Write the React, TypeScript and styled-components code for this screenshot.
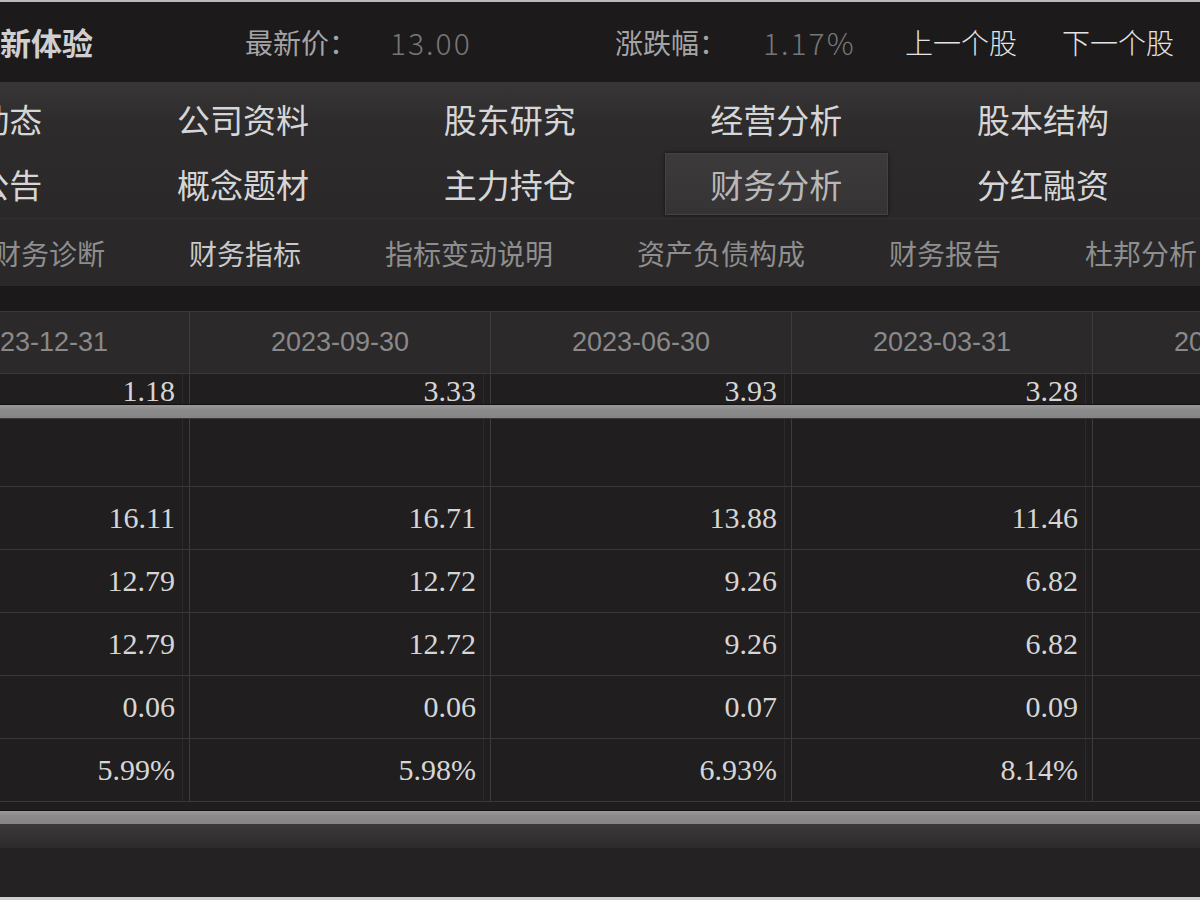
import styled, { createGlobalStyle } from 'styled-components';

const GlobalStyle = createGlobalStyle`
  html, body {
    margin: 0;
    padding: 0;
    background: #1d1b1c;
    overflow: hidden;
  }

  #root {
    width: 1200px;
    height: 900px;
    overflow: hidden;
  }
`;

const CJK = `'Noto Sans CJK SC', 'Noto Sans', sans-serif`;

const PERIODS = ['2023-12-31', '2023-09-30', '2023-06-30', '2023-03-31', '2022-12-31'];

const ROWS: (string[] | null)[] = [
  null,
  ['16.11', '16.71', '13.88', '11.46', ''],
  ['12.79', '12.72', '9.26', '6.82', ''],
  ['12.79', '12.72', '9.26', '6.82', ''],
  ['0.06', '0.06', '0.07', '0.09', ''],
  ['5.99%', '5.98%', '6.93%', '8.14%', ''],
];

const TOP_ROW = ['1.18', '3.33', '3.93', '3.28', ''];

const NAV_TABS = [
  ['最新动态', '公司资料', '股东研究', '经营分析', '股本结构'],
  ['新闻公告', '概念题材', '主力持仓', '财务分析', '分红融资'],
];

const SUB_TABS = ['财务诊断', '财务指标', '指标变动说明', '资产负债构成', '财务报告', '杜邦分析'];

const Page = styled.div`
  width: 1200px;
  height: 900px;
  display: flex;
  flex-direction: column;
  background: #242223;
  font-family: ${CJK};
  overflow: hidden;
`;

const TopEdge = styled.div`
  height: 2px;
  flex: none;
  background: #b9b9b9;
`;

const QuoteBar = styled.div`
  height: 80px;
  flex: none;
  display: flex;
  align-items: center;
  background: #1c1a1b;
  font-size: 28px;
`;

const Brand = styled.div`
  width: 245px;
  flex: none;
  font-size: 31px;
  font-weight: 700;
  color: #cfcfcf;
  margin-top: -2px;
`;

const QuoteField = styled.div<{ $width: number; $gap: number }>`
  width: ${(p) => p.$width}px;
  flex: none;
  display: flex;
  gap: ${(p) => p.$gap}px;
  align-items: center;
`;

const QuoteLabel = styled.span`
  color: #a4a4a4;
`;

const QuoteValue = styled.span`
  color: #777777;
  font-weight: 300;
  font-size: 30px;
  letter-spacing: 2px;
`;

const StockLinks = styled.div`
  display: flex;
  gap: 45px;
`;

const StockLink = styled.span`
  color: #e4e4e4;
  font-weight: 300;
`;

const NavArea = styled.div`
  height: 136px;
  flex: none;
  box-sizing: border-box;
  padding-top: 6px;
  background: linear-gradient(#383637, #2d2b2c 30%, #2a2829);
  overflow: hidden;
`;

const NavGrid = styled.div`
  margin-left: -157px;
  display: grid;
  grid-template-columns: repeat(5, 266.67px);
  grid-auto-rows: 62px;
  row-gap: 3px;
`;

const NavCell = styled.div`
  display: flex;
  justify-content: center;
  align-items: center;
`;

const NavTab = styled.div<{ $active?: boolean }>`
  width: 223px;
  height: 62px;
  box-sizing: border-box;
  display: flex;
  justify-content: center;
  align-items: center;
  font-size: 33px;
  color: ${(p) => (p.$active ? '#b8b8b8' : '#d6d6d6')};
  background: ${(p) => (p.$active ? 'linear-gradient(#3c3a3b, #353334)' : 'transparent')};
  border: 1px solid ${(p) => (p.$active ? '#444243' : 'transparent')};
  box-shadow: ${(p) => (p.$active ? '0 0 4px rgba(0,0,0,0.6)' : 'none')};
`;

const SubNav = styled.div`
  height: 67px;
  flex: none;
  display: flex;
  align-items: center;
  gap: 84px;
  background: #2a2829;
  border-top: 1px solid #323031;
  overflow: hidden;
`;

const SubTab = styled.span<{ $active?: boolean; $first?: boolean }>`
  flex: none;
  font-size: 28px;
  margin-left: ${(p) => (p.$first ? '-7px' : '0')};
  color: ${(p) => (p.$active ? '#c9c9c9' : '#8e8e8e')};
`;

const Gap = styled.div`
  height: 25px;
  flex: none;
  background: #1b191a;
`;

const TableArea = styled.div`
  flex: none;
  margin-left: -111px;
  width: 1505px;
`;

const Row = styled.div<{ $height: number; $head?: boolean }>`
  display: grid;
  grid-template-columns: repeat(5, 301px);
  height: ${(p) => p.$height}px;
  box-sizing: border-box;
  background: ${(p) => (p.$head ? '#2b292a' : '#201e1f')};
  border-top: 1px solid #3a3839;
`;

const Cell = styled.div<{ $head?: boolean }>`
  display: flex;
  align-items: center;
  justify-content: ${(p) => (p.$head ? 'center' : 'flex-end')};
  padding-right: ${(p) => (p.$head ? '0' : '14px')};
  border-right: 1px solid #3d3b3c;
  background-image: linear-gradient(
    to left,
    transparent 6px,
    #2c2a2b 6px,
    #2c2a2b 7px,
    transparent 7px
  );
  font-family: ${(p) => (p.$head ? `'Liberation Sans', Arial, sans-serif` : `'Liberation Serif', 'Times New Roman', serif`)};
  font-size: ${(p) => (p.$head ? '27px' : '30px')};
  color: ${(p) => (p.$head ? '#8a8a8a' : '#d6d6d6')};
`;

const Splitter = styled.div`
  height: 14px;
  flex: none;
  background: linear-gradient(#9a9a9a, #8a8a8a 40%, #858585);
  border-top: 1px solid #121011;
  box-sizing: border-box;
`;

const TableEnd = styled.div`
  height: 8px;
  flex: none;
  background: #1f1d1e;
  border-top: 1px solid #3a3839;
`;

const FooterShade = styled.div`
  height: 24px;
  flex: none;
  background: linear-gradient(#3b393a, #333132 60%, #2c2a2b);
`;

const FooterFill = styled.div`
  flex: 1;
  background: #242223;
`;

const BottomEdge = styled.div`
  height: 3px;
  flex: none;
  background: #cfcfcf;
`;

const App = () => {
  return (
    <>
      <GlobalStyle />
      <Page>
        <TopEdge />

        <QuoteBar>
          <Brand>新体验</Brand>
          <QuoteField $width={370} $gap={33}>
            <QuoteLabel>最新价：</QuoteLabel>
            <QuoteValue>13.00</QuoteValue>
          </QuoteField>
          <QuoteField $width={290} $gap={36}>
            <QuoteLabel>涨跌幅：</QuoteLabel>
            <QuoteValue>1.17%</QuoteValue>
          </QuoteField>
          <StockLinks>
            <StockLink>上一个股</StockLink>
            <StockLink>下一个股</StockLink>
          </StockLinks>
        </QuoteBar>

        <NavArea>
          <NavGrid>
            {NAV_TABS.flat().map((label) => (
              <NavCell key={label}>
                <NavTab $active={label === '财务分析'}>{label}</NavTab>
              </NavCell>
            ))}
          </NavGrid>
        </NavArea>

        <SubNav>
          {SUB_TABS.map((label, i) => (
            <SubTab key={label} $first={i === 0} $active={label === '财务指标'}>
              {label}
            </SubTab>
          ))}
        </SubNav>

        <Gap />

        <TableArea>
          <Row $height={62} $head>
            {PERIODS.map((p) => (
              <Cell key={p} $head>
                {p}
              </Cell>
            ))}
          </Row>
          <Row $height={31}>
            {TOP_ROW.map((v, i) => (
              <Cell key={i}>{v}</Cell>
            ))}
          </Row>
        </TableArea>

        <Splitter />

        <TableArea>
          {ROWS.map((row, r) => (
            <Row key={r} $height={r === 0 ? 68 : 63}>
              {(row ?? ['', '', '', '', '']).map((v, i) => (
                <Cell key={i}>{v}</Cell>
              ))}
            </Row>
          ))}
        </TableArea>

        <TableEnd />
        <Splitter />
        <FooterShade />
        <FooterFill />
        <BottomEdge />
      </Page>
    </>
  );
};

export default App;
